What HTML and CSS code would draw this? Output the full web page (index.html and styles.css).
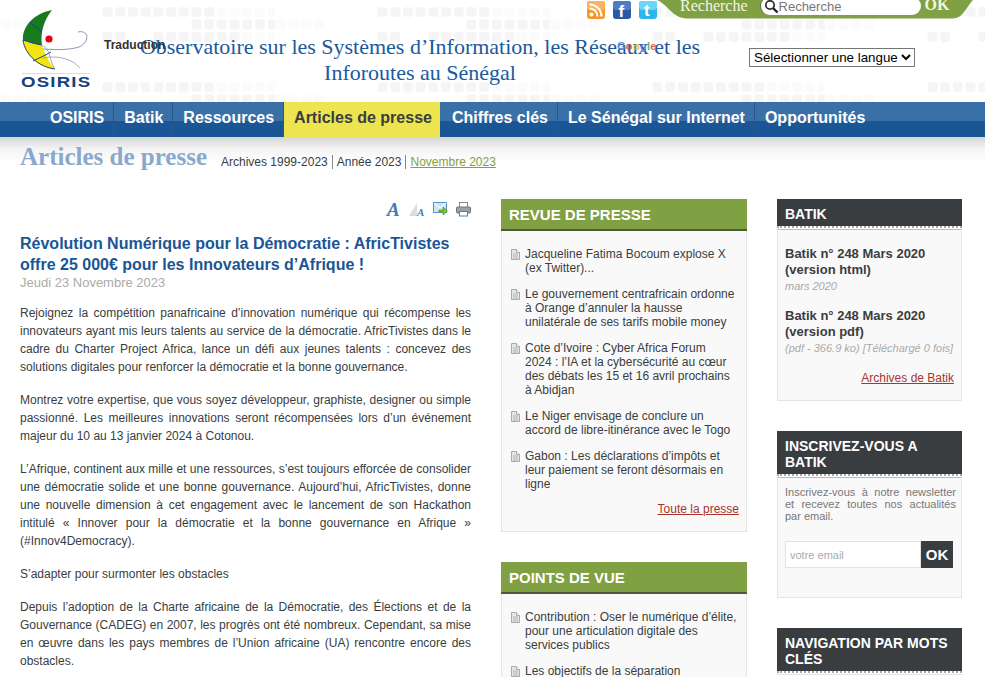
FILE: index.html
```html
<!DOCTYPE html>
<html lang="fr">
<head>
<meta charset="utf-8">
<title>Articles de presse - OSIRIS</title>
<link rel="stylesheet" href="styles.css">
</head>
<body>
<svg class="defs" width="0" height="0" aria-hidden="true">
  <defs>
    <symbol id="doc" viewBox="0 0 9 11">
      <path d="M.5.5h5l3 3v7H.5z" fill="#e6e6e6" stroke="#aaa"/>
      <path d="M5.500.5v3h3" fill="#fff" stroke="#aaa"/>
      <path d="M2 5h5M2 7h5M2 9h5" stroke="#b4b4b4"/>
    </symbol>
    <pattern id="dot" width="12.7" height="12.5" patternUnits="userSpaceOnUse">
      <rect x="1" y="7" width="10" height="10" rx="3" fill="#f5f5f5"/>
      <rect x="1" y="-5.500" width="10" height="10" rx="3" fill="#f5f5f5"/>
    </pattern>
    <pattern id="dot-light" width="12.7" height="12.5" patternUnits="userSpaceOnUse">
      <rect x="1" y="7" width="10" height="10" rx="3" fill="#fbfbfb"/>
      <rect x="1" y="-5.500" width="10" height="10" rx="3" fill="#fbfbfb"/>
    </pattern>
    <pattern id="tile" width="275" height="102" patternUnits="userSpaceOnUse">
      <rect x="101" y="7" width="115" height="10" fill="url(#dot)"/>
      <rect x="216" y="7" width="95" height="10" fill="url(#dot-light)"/>
      <rect x="191" y="19" width="84" height="11" fill="url(#dot)"/>
      <rect x="0" y="19" width="50" height="11" fill="url(#dot-light)"/>
      <rect x="101" y="32" width="26" height="10" fill="url(#dot)"/>
      <rect x="153" y="32" width="90" height="10" fill="url(#dot)"/>
      <rect x="243" y="32" width="32" height="10" fill="url(#dot-light)"/>
      <rect x="101" y="82" width="115" height="10" fill="url(#dot)"/>
      <rect x="216" y="82" width="95" height="10" fill="url(#dot-light)"/>
      <rect x="191" y="94" width="84" height="8" fill="url(#dot)"/>
      <rect x="0" y="94" width="50" height="8" fill="url(#dot-light)"/>
    </pattern>
  </defs>
</svg>

<header class="site-header">
  <svg class="header-bg" width="985" height="102" aria-hidden="true"><rect width="985" height="102" fill="url(#tile)"/></svg>
  <a class="logo">
    <svg class="logo-mark" width="72" height="65" viewBox="0 0 72 65" aria-hidden="true">
      <rect x="1" y="64" width="68" height="1" fill="#dcdcdc"/>
      <path d="M31 1C15 4 1 16 2 31c6 2 12 4 19 5C19 24 23 11 31 1z" fill="#187a1f"/>
      <path d="M2 31c6 2 12 4 19 5 2 8 7 17 13 24C18 58 4 46 2 31z" fill="#f3e60f"/>
      <path d="M9 13c4 4 10 8 12 10M2 31c6 2 12 4 19 5M2 31c2 15 16 27 32 29M12 52c6-3 11-5 18-9" fill="none" stroke="#1d3f7c" stroke-width="1"/>
      <path d="M22 40c14 1 26 1 36-2 8-3 9-11 7-13-1-2-5-3-8-2" fill="none" stroke="#8d96b3" stroke-width="1"/>
      <path d="M22 49c10-2 20-1 28 3 4 2 7 5 9 7M20 36c10 3 8 16 14 24" fill="none" stroke="#8d96b3" stroke-width=".8"/>
      <circle cx="28" cy="30" r="3.600" fill="#e60012"/>
    </svg>
    <span class="logo-text">OSIRIS</span>
  </a>
  <div class="topbar">
    <ul class="social">
      <li>
        <svg width="18" height="18" viewBox="0 0 18 18" aria-hidden="true"><rect width="18" height="18" rx="3" fill="#f7942a"/><rect width="18" height="9" rx="3" fill="#fbb25d"/><circle cx="4.500" cy="13.500" r="2" fill="#fff"/><path d="M2.500 7.500a8 8 0 0 1 8 8M2.500 3.500a12 12 0 0 1 12 12" fill="none" stroke="#fff" stroke-width="2.200"/></svg>
      </li>
      <li>
        <svg width="18" height="18" viewBox="0 0 18 18" aria-hidden="true"><rect width="18" height="18" rx="3" fill="#2a58a5"/><rect width="18" height="9" rx="3" fill="#4f7cc4"/><text x="5.500" y="16" class="fb-f">f</text></svg>
      </li>
      <li>
        <svg width="18" height="18" viewBox="0 0 18 18" aria-hidden="true"><rect width="18" height="18" rx="3" fill="#2fb4ee"/><rect width="18" height="9" rx="3" fill="#6dd3f8"/><text x="5" y="15" class="tw-t">t</text></svg>
      </li>
    </ul>
    <form class="search">
      <label class="search-label">Recherche</label>
      <span class="search-field">
        <svg class="search-icon" width="15" height="15" viewBox="0 0 15 15" aria-hidden="true"><circle cx="6" cy="6" r="4.200" fill="#fff" stroke="#333" stroke-width="1.800"/><path d="M9 9l4.500 4.500" stroke="#222" stroke-width="2.400"/></svg>
        <input class="search-input" type="text" placeholder="Recherche">
      </span>
      <span class="search-ok">OK</span>
    </form>
  </div>
  <h1 class="site-title">Observatoire sur les Systèmes d’Information, les Réseaux et les Inforoutes au Sénégal</h1>
  <div class="lang">
    <select class="lang-select"><option>Sélectionner une langue</option></select>
  </div>
  <span class="traduction">Traduction</span>
  <span class="google"><b class="g-b">G</b><b class="g-r">o</b><b class="g-y">o</b><b class="g-b">g</b><b class="g-g">l</b><b class="g-r">e</b></span>
</header>

<nav class="main-nav">
  <a class="nav-item">OSIRIS</a>
  <a class="nav-item">Batik</a>
  <a class="nav-item">Ressources</a>
  <a class="nav-item nav-active">Articles de presse</a>
  <a class="nav-item">Chiffres clés</a>
  <a class="nav-item">Le Sénégal sur Internet</a>
  <a class="nav-item">Opportunités</a>
</nav>

<div class="page-head">
  <h2 class="page-title">Articles de presse</h2>
  <div class="crumbs">
    <a class="crumb">Archives 1999-2023</a>
    <a class="crumb">Année 2023</a>
    <a class="crumb crumb-current">Novembre 2023</a>
  </div>
</div>

<main class="columns">
  <article class="article">
    <div class="tools">
      <svg width="16" height="16" viewBox="0 0 16 16" aria-hidden="true"><path d="M0 14l5-7v7z" fill="#ddd"/><text x="2" y="14" class="tool-a">A</text></svg>
      <svg width="16" height="16" viewBox="0 0 16 16" aria-hidden="true"><path d="M0 14l8-13v13z" fill="#ddd"/><text x="8" y="14" class="tool-a-small">A</text></svg>
      <svg width="15" height="15" viewBox="0 0 15 15" aria-hidden="true"><rect x=".5" y=".5" width="13" height="10" fill="#cfe4f7" stroke="#5b93c9"/><path d="M1 1l6 5 6-5" fill="none" stroke="#fff"/><path d="M6 8h4V5l4.500 4-4.500 4v-3H6z" fill="#7fc31c" stroke="#4d8a10" stroke-width=".6"/></svg>
      <svg width="15" height="15" viewBox="0 0 15 15" aria-hidden="true"><rect x="3.500" y=".5" width="8" height="5" fill="#fff" stroke="#888"/><rect x=".5" y="5" width="14" height="6" rx="1" fill="#9aa2a8" stroke="#6c767e"/><rect x="3.500" y="9.500" width="8" height="4.500" fill="#fff" stroke="#5a7fa5"/></svg>
    </div>
    <h3 class="article-title">Révolution Numérique pour la Démocratie : AfricTivistes offre 25 000€ pour les Innovateurs d’Afrique !</h3>
    <p class="article-date">Jeudi 23 Novembre 2023</p>
    <p class="para">Rejoignez la compétition panafricaine d’innovation numérique qui récompense les innovateurs ayant mis leurs talents au service de la démocratie. AfricTivistes dans le cadre du Charter Project Africa, lance un défi aux jeunes talents : concevez des solutions digitales pour renforcer la démocratie et la bonne gouvernance.</p>
    <p class="para">Montrez votre expertise, que vous soyez développeur, graphiste, designer ou simple passionné. Les meilleures innovations seront récompensées lors d’un événement majeur du 10 au 13 janvier 2024 à Cotonou.</p>
    <p class="para">L’Afrique, continent aux mille et une ressources, s’est toujours efforcée de consolider une démocratie solide et une bonne gouvernance. Aujourd’hui, AfricTivistes, donne une nouvelle dimension à cet engagement avec le lancement de son Hackathon intitulé « Innover pour la démocratie et la bonne gouvernance en Afrique » (#Innov4Democracy).</p>
    <p class="para">S’adapter pour surmonter les obstacles</p>
    <p class="para">Depuis l’adoption de la Charte africaine de la Démocratie, des Élections et de la Gouvernance (CADEG) en 2007, les progrès ont été nombreux. Cependant, sa mise en œuvre dans les pays membres de l’Union africaine (UA) rencontre encore des obstacles.</p>
  </article>

  <aside class="mid">
    <section class="box">
      <h4 class="box-head box-head-green">REVUE DE PRESSE</h4>
      <div class="box-body list-body">
        <ul class="doc-list">
          <li class="doc-item"><svg class="doc-icon" width="9" height="11"><use href="#doc"/></svg><span>Jacqueline Fatima Bocoum explose X (ex Twitter)...</span></li>
          <li class="doc-item"><svg class="doc-icon" width="9" height="11"><use href="#doc"/></svg><span>Le gouvernement centrafricain ordonne à Orange d’annuler la hausse unilatérale de ses tarifs mobile money</span></li>
          <li class="doc-item"><svg class="doc-icon" width="9" height="11"><use href="#doc"/></svg><span>Cote d’Ivoire : Cyber Africa Forum<br>2024 : l’IA et la cybersécurité au cœur des débats les 15 et 16 avril prochains à Abidjan</span></li>
          <li class="doc-item"><svg class="doc-icon" width="9" height="11"><use href="#doc"/></svg><span>Le Niger envisage de conclure un accord de libre-itinérance avec le Togo</span></li>
          <li class="doc-item"><svg class="doc-icon" width="9" height="11"><use href="#doc"/></svg><span>Gabon : Les déclarations d’impôts et leur paiement se feront désormais en ligne</span></li>
        </ul>
        <a class="more more-press">Toute la presse</a>
      </div>
    </section>
    <section class="box">
      <h4 class="box-head box-head-green">POINTS DE VUE</h4>
      <div class="box-body list-body">
        <ul class="doc-list">
          <li class="doc-item"><svg class="doc-icon" width="9" height="11"><use href="#doc"/></svg><span>Contribution : Oser le numérique d’élite, pour une articulation digitale des services publics</span></li>
          <li class="doc-item"><svg class="doc-icon" width="9" height="11"><use href="#doc"/></svg><span>Les objectifs de la séparation fonctionnelle</span></li>
        </ul>
      </div>
    </section>
  </aside>

  <aside class="side">
    <section class="box">
      <h4 class="box-head box-head-dark">BATIK</h4>
      <div class="box-body batik-body">
        <h5 class="batik-title">Batik n° 248 Mars 2020 (version html)</h5>
        <p class="batik-meta">mars 2020</p>
        <h5 class="batik-title batik-second">Batik n° 248 Mars 2020 (version pdf)</h5>
        <p class="batik-meta">(pdf - 366.9 ko) [Téléchargé 0 fois]</p>
        <a class="more more-batik">Archives de Batik</a>
      </div>
    </section>
    <section class="box">
      <h4 class="box-head box-head-dark">INSCRIVEZ-VOUS A BATIK</h4>
      <div class="box-body news-body">
        <p class="news-text">Inscrivez-vous à notre newsletter et recevez toutes nos actualités par email.</p>
        <form class="news-form">
          <input class="news-input" type="text" placeholder="votre email">
          <span class="news-ok">OK</span>
        </form>
      </div>
    </section>
    <section class="box">
      <h4 class="box-head box-head-dark">NAVIGATION PAR MOTS CLÉS</h4>
      <div class="box-body"></div>
    </section>
  </aside>
</main>
</body>
</html>
```

FILE: styles.css
```css
* { box-sizing: border-box; }
html, body { height: 677px; overflow: hidden; }
body {
  margin: 0;
  background: #fff;
  color: #3a3d40;
  font-family: "Liberation Sans", Arial, sans-serif;
  font-size: 12px;
}
.defs { position: absolute; }
ul { list-style: none; margin: 0; padding: 0; }
h1, h2, h3, h4, h5, p { margin: 0; }

/* Header */
.site-header {
  position: relative;
  height: 102px;
  display: grid;
  grid-template-columns: 130px 580px 1fr;
  grid-template-rows: 19px 1fr;
}
.header-bg { position: absolute; left: 0; top: 0; }
.logo {
  position: relative;
  grid-column: 1;
  grid-row: 1 / 3;
  padding: 9px 0 0 21px;
  display: flex;
  flex-direction: column;
  align-items: flex-start;
}
.logo-mark { display: block; }
.logo-text {
  margin-top: 0;
  color: #16407f;
  font-weight: bold;
  font-size: 15.500px;
  line-height: 15px;
  letter-spacing: 1px;
  transform: scaleX(1.2);
  transform-origin: left center;
}
.topbar {
  position: relative;
  grid-column: 2 / 4;
  grid-row: 1;
  display: flex;
  align-items: flex-start;
  padding-left: 457px;
}
.social { display: flex; gap: 8px; padding-top: 1px; }
.social li { height: 18px; }
.social svg { display: block; }
.fb-f { fill: #fff; font: bold 17px "Liberation Sans", sans-serif; }
.tw-t { fill: #fff; font: bold 17px "Liberation Sans", sans-serif; }
.search {
  width: 316px;
  height: 19px;
  background: #7fa143;
  clip-path: path("M0 0C10 4 16 18.500 30 18.500H296C306 18.500 310 6 316 0Z");
  display: flex;
  align-items: flex-start;
  padding-left: 23px;
  overflow: hidden;
}
.search-label {
  font-family: "Liberation Serif", serif;
  font-size: 16px;
  line-height: 12px;
  color: #f4f6e0;
}
.search-field {
  position: relative;
  margin: -3px 0 0 12px;
  width: 161px;
  height: 18px;
  display: block;
}
.search-icon { position: absolute; left: 4px; top: 2px; }
.search-input {
  display: block;
  width: 100%;
  height: 18px;
  border: 0;
  border-left: 1px solid #5a6b42;
  border-radius: 9px;
  background: #fff;
  padding: 0 0 0 18px;
  font: 13px "Liberation Sans", sans-serif;
  outline: 0;
}
.search-input::placeholder { color: #777; opacity: 1; }
.search-ok {
  margin-left: 4px;
  font: bold 16px/10px "Liberation Serif", serif;
  color: #f4f6e0;
}
.site-title {
  position: relative;
  grid-column: 2;
  grid-row: 2;
  padding-top: 15px;
  text-align: center;
  color: #1a5a9e;
  font: normal 22px/26px "Liberation Serif", serif;
}
.lang { position: relative; grid-column: 3; grid-row: 2; padding: 29px 0 0 39px; }
.lang-select {
  width: 166px;
  height: 19px;
  font: 13.333px "Liberation Sans", sans-serif;
  background: #fff;
  color: #000;
}
.traduction {
  position: absolute;
  left: 104px;
  top: 38px;
  font-size: 12px;
  font-weight: bold;
  color: #333;
}
.google {
  position: absolute;
  left: 617px;
  top: 41px;
  font-size: 11px;
  line-height: 10px;
  letter-spacing: .3px;
  opacity: .85;
}
.g-b { color: #4a80d8; }
.g-r { color: #d84a3a; }
.g-y { color: #d8b42a; }
.g-g { color: #4aa858; }

/* Nav */
.main-nav {
  height: 35px;
  padding-left: 40px;
  display: flex;
  background: linear-gradient(#3a70a8 0, #3a70a8 19px, #1a5595 19px);
}
.nav-item {
  padding: 0 9px 0 10px;
  color: #fff;
  font-size: 16px;
  font-weight: bold;
  line-height: 31px;
  border-right: 1px solid #2a5688;
}
.nav-item:last-child { border-right: 0; }
.nav-active {
  background: #ece54f;
  color: #3a3d40;
  border-right: 0;
  padding-right: 8px;
  margin-right: 2px;
}

/* Page head */
.page-head {
  height: 44px;
  padding-left: 20px;
  display: flex;
  align-items: flex-start;
  background: linear-gradient(#d6d6d6, #f4f4f4 12px, #fff 26px);
}
.page-title {
  color: #89a9cc;
  font: bold 25px/40px "Liberation Serif", serif;
}
.crumbs { display: flex; padding: 18px 0 0 10px; }
.crumb { padding: 0 4px; line-height: 14px; border-right: 1px solid #888; color: #3a3d40; }
.crumb:last-child { border-right: 0; }
.crumb-current { color: #7fa143; text-decoration: underline; }

/* Columns */
.columns {
  padding: 18px 23px 0 20px;
  display: grid;
  grid-template-columns: 451px 246px 185px;
  column-gap: 30px;
  align-items: start;
}
.tools { display: flex; justify-content: flex-end; gap: 8px; height: 34px; padding-top: 3px; }
.tool-a { fill: #3d7cb8; font: italic bold 19px "Liberation Serif", serif; }
.tool-a-small { fill: #3d7cb8; font: italic bold 11px "Liberation Serif", serif; }
.article-title { color: #1a5595; font-size: 16px; line-height: 21px; font-weight: bold; }
.article-date { color: #aaa; font-size: 13px; line-height: 16px; margin-bottom: 13px; }
.para { color: #3a3d40; line-height: 18px; text-align: justify; margin-bottom: 15px; }

/* Boxes */
.mid, .side { display: flex; flex-direction: column; gap: 30px; }
.box-head { color: #fff; font-size: 15px; font-weight: bold; line-height: 16px; }
.box-head-green {
  height: 32px;
  padding: 8px 8px 0;
  background: #7fa143;
  border-bottom: 2px solid #4a5a3a;
}
.box-head-dark {
  padding: 7px 8px 4px;
  background: #3a3d40;
  font-size: 14px;
  border-bottom: 2px dotted #a9a9a9;
  background-clip: padding-box;
  margin-bottom: 1px;
}
.box-body { background: #f9f9f9; border: 1px solid #e5e5e5; border-top: 0; }
.list-body { padding: 16px 9px 15px 8px; }
.doc-list { display: flex; flex-direction: column; gap: 12px; }
.doc-item { display: flex; gap: 5px; line-height: 14px; color: #3a3d40; }
.doc-item span { flex: 1; }
.doc-icon { flex: none; margin: 2px 0 0 1px; }
.more { display: block; text-align: right; color: #a8342c; text-decoration: underline; }
.more-press { margin: 11px -2px 0 0; }
.batik-body { padding: 16px 7px 15px 7px; border-top: 1px solid #bbb; }
.batik-title { font-size: 13px; line-height: 16px; font-weight: bold; color: #3a3d40; }
.batik-second { margin-top: 14px; }
.batik-meta { font-size: 11px; line-height: 16px; font-style: italic; color: #aaa; white-space: nowrap; }
.more-batik { margin-top: 15px; }
.news-body { height: 121px; padding: 8px 5px 0 7px; border-top: 1px solid #bbb; }
.news-text { font-size: 11px; line-height: 12px; color: #777; text-align: justify; }
.news-form { display: flex; margin-top: 19px; padding-right: 3px; }
.news-input {
  flex: 1;
  min-width: 0;
  height: 27px;
  border: 1px solid #e2e2e2;
  background: #fff;
  padding: 0 4px;
  font: 11px "Liberation Sans", sans-serif;
}
.news-input::placeholder { color: #aaa; opacity: 1; }
.news-ok {
  width: 32px;
  height: 27px;
  background: #3a3d40;
  color: #fff;
  font-size: 15px;
  font-weight: bold;
  line-height: 27px;
  text-align: center;
}
```
